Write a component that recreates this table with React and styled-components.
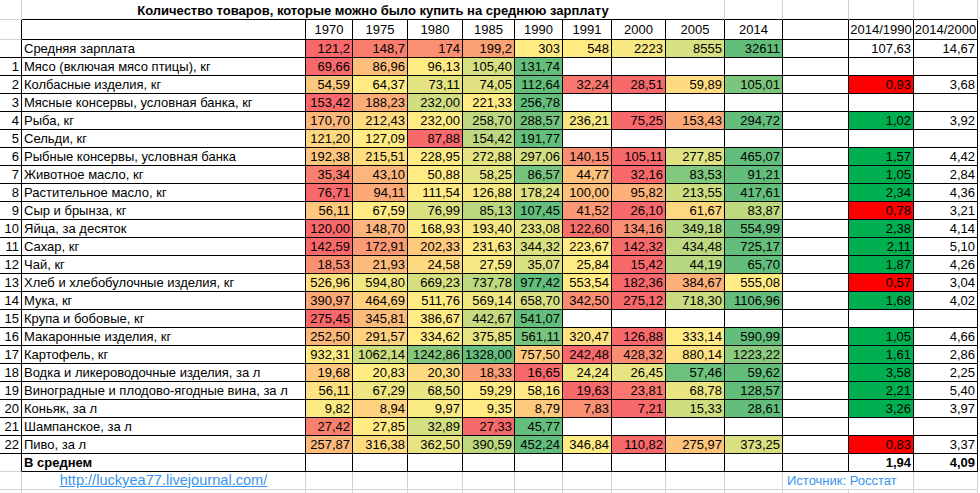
import React from 'react'
import styled, { createGlobalStyle } from 'styled-components'

const GlobalStyle = createGlobalStyle`
  html, body { margin: 0; padding: 0; background: #fff; overflow: hidden; }
  body { font-family: "Liberation Sans", Arial, sans-serif; font-size: 13px; color: #000; }
`

const GRID = '#d4d4d4'
const years = ['1970', '1975', '1980', '1985', '1990', '1991', '2000', '2005', '2014']

const rows = [
  { n: 1, label: 'Мясо (включая мясо птицы), кг', v: ['69,66', '86,96', '96,13', '105,40', '131,74'] },
  { n: 2, label: 'Колбасные изделия, кг', v: ['54,59', '64,37', '73,11', '74,05', '112,64', '32,24', '28,51', '59,89', '105,01'], r1: '0,93', r2: '3,68' },
  { n: 3, label: 'Мясные консервы, условная банка, кг', v: ['153,42', '188,23', '232,00', '221,33', '256,78'] },
  { n: 4, label: 'Рыба, кг', v: ['170,70', '212,43', '232,00', '258,70', '288,57', '236,21', '75,25', '153,43', '294,72'], r1: '1,02', r2: '3,92' },
  { n: 5, label: 'Сельди, кг', v: ['121,20', '127,09', '87,88', '154,42', '191,77'] },
  { n: 6, label: 'Рыбные консервы, условная банка', v: ['192,38', '215,51', '228,95', '272,88', '297,06', '140,15', '105,11', '277,85', '465,07'], r1: '1,57', r2: '4,42' },
  { n: 7, label: 'Животное масло, кг', v: ['35,34', '43,10', '50,88', '58,25', '86,57', '44,77', '32,16', '83,53', '91,21'], r1: '1,05', r2: '2,84' },
  { n: 8, label: 'Растительное масло, кг', v: ['76,71', '94,11', '111,54', '126,88', '178,24', '100,00', '95,82', '213,55', '417,61'], r1: '2,34', r2: '4,36' },
  { n: 9, label: 'Сыр и брынза, кг', v: ['56,11', '67,59', '76,99', '85,13', '107,45', '41,52', '26,10', '61,67', '83,87'], r1: '0,78', r2: '3,21' },
  { n: 10, label: 'Яйца, за десяток', v: ['120,00', '148,70', '168,93', '193,40', '233,08', '122,60', '134,16', '349,18', '554,99'], r1: '2,38', r2: '4,14' },
  { n: 11, label: 'Сахар, кг', v: ['142,59', '172,91', '202,33', '231,63', '344,32', '223,67', '142,32', '434,48', '725,17'], r1: '2,11', r2: '5,10' },
  { n: 12, label: 'Чай, кг', v: ['18,53', '21,93', '24,58', '27,59', '35,07', '25,84', '15,42', '44,19', '65,70'], r1: '1,87', r2: '4,26' },
  { n: 13, label: 'Хлеб и хлебобулочные изделия, кг', v: ['526,96', '594,80', '669,23', '737,78', '977,42', '553,54', '182,36', '384,67', '555,08'], r1: '0,57', r2: '3,04' },
  { n: 14, label: 'Мука, кг', v: ['390,97', '464,69', '511,76', '569,14', '658,70', '342,50', '275,12', '718,30', '1106,96'], r1: '1,68', r2: '4,02' },
  { n: 15, label: 'Крупа и бобовые, кг', v: ['275,45', '345,81', '386,67', '442,67', '541,07'] },
  { n: 16, label: 'Макаронные изделия, кг', v: ['252,50', '291,57', '334,62', '375,85', '561,11', '320,47', '126,88', '333,14', '590,99'], r1: '1,05', r2: '4,66' },
  { n: 17, label: 'Картофель, кг', v: ['932,31', '1062,14', '1242,86', '1328,00', '757,50', '242,48', '428,32', '880,14', '1223,22'], r1: '1,61', r2: '2,86' },
  { n: 18, label: 'Водка и ликероводочные изделия, за л', v: ['19,68', '20,83', '20,30', '18,33', '16,65', '24,24', '26,45', '57,46', '59,62'], r1: '3,58', r2: '2,25' },
  { n: 19, label: 'Виноградные и плодово-ягодные вина, за л', v: ['56,11', '67,29', '68,50', '59,29', '58,16', '19,63', '23,81', '68,78', '128,57'], r1: '2,21', r2: '5,40' },
  { n: 20, label: 'Коньяк, за л', v: ['9,82', '8,94', '9,97', '9,35', '8,79', '7,83', '7,21', '15,33', '28,61'], r1: '3,26', r2: '3,97' },
  { n: 21, label: 'Шампанское, за л', v: ['27,42', '27,85', '32,89', '27,33', '45,77'] },
  { n: 22, label: 'Пиво, за л', v: ['257,87', '316,38', '362,50', '390,59', '452,24', '346,84', '110,82', '275,97', '373,25'], r1: '0,83', r2: '3,37' },
]

const salary = ['121,2', '148,7', '174', '199,2', '303', '548', '2223', '8555', '32611']

// excel 3-color scale: min red, median yellow, max green
const RED = [248, 105, 107]
const YEL = [255, 235, 132]
const GRN = [99, 190, 123]
const num = s => parseFloat(s.replace(',', '.'))
const mix = (a, b, t) => `rgb(${a.map((c, i) => Math.round(c + (b[i] - c) * t)).join(',')})`

function scaleColors(vals) {
  const nums = vals.map(num)
  const sorted = [...nums].sort((a, b) => a - b)
  const min = sorted[0]
  const max = sorted[sorted.length - 1]
  const mid = sorted[Math.floor(sorted.length / 2)]
  return nums.map(v => {
    if (v <= mid) return mix(RED, YEL, mid === min ? 1 : (v - min) / (mid - min))
    return mix(YEL, GRN, (v - mid) / (max - mid))
  })
}

const Sheet = styled.div`
  display: grid;
  grid-template-columns: 22px 284px 47px 55px 55px 52px 48px 49px 54px 59px 58px 66px 65px 64px;
  grid-template-rows: 20px 20px repeat(26, 18px);
  width: 978px;
`

const Cell = styled.div`
  box-sizing: border-box;
  display: flex;
  align-items: center;
  justify-content: ${p => (p.$align === 'center' ? 'center' : p.$align === 'left' ? 'flex-start' : 'flex-end')};
  padding: 0 2px;
  white-space: nowrap;
  line-height: 17px;
  border-right: 1px solid ${p => (p.$softRight ? GRID : '#000')};
  border-bottom: 1px solid ${p => (p.$softBottom ? GRID : '#000')};
  background: ${p => p.$fill || '#fff'};
  font-weight: ${p => (p.$bold ? 700 : 400)};
  grid-column: ${p => (p.$span ? `span ${p.$span}` : 'auto')};
`

const Title = styled(Cell)`
  justify-content: center;
  font-weight: 700;
  padding-top: 1px;
`

const Label = styled(Cell)`
  justify-content: flex-start;
  padding-left: 2px;
`

const Ratio = styled(Cell)`
  background: ${p => (p.$tone === 'bad' ? '#ff0000' : p.$tone === 'good' ? '#00b050' : '#fff')};
`

const Link = styled.a`
  color: #3a94ee;
  font-size: 14.6px;
  text-decoration: underline;
`

const Source = styled.span`
  color: #3a94ee;
  padding-left: 2px;
`

function DataRow({ n, label, v, r1, r2, bold, softIndex }) {
  const colors = v.length ? scaleColors(v) : []
  return (
    <>
      <Cell $softBottom={softIndex}>{n}</Cell>
      <Label $bold={bold}>{label}</Label>
      {years.map((y, i) => (
        <Cell key={y} $fill={v[i] ? colors[i] : undefined}>{v[i] || ''}</Cell>
      ))}
      <Cell />
      <Ratio $tone={r1 && n ? (num(r1) < 1 ? 'bad' : 'good') : undefined} $bold={bold}>{r1 || ''}</Ratio>
      <Cell $bold={bold}>{r2 || ''}</Cell>
    </>
  )
}

function GreyRow() {
  return Array.from({ length: 14 }, (_, i) => <Cell key={i} $softRight $softBottom />)
}

export default function App() {
  return (
    <>
      <GlobalStyle />
      <Sheet>
        <Cell $softRight $softBottom />
        <Title $span={9} $softRight>Количество товаров, которые можно было купить на среднюю зарплату</Title>
        <Cell $softRight />
        <Cell $softRight />
        <Cell $softRight />
        <Cell $softRight />

        <Cell $softBottom />
        <Cell />
        {years.map(y => <Cell key={y} $align="center">{y}</Cell>)}
        <Cell />
        <Cell $align="center">2014/1990</Cell>
        <Cell $align="center">2014/2000</Cell>

        <DataRow n="" label="Средняя зарплата" v={salary} r1="107,63" r2="14,67" />
        {rows.map(r => <DataRow key={r.n} {...r} />)}
        <DataRow n="" label="В среднем" v={[]} r1="1,94" r2="4,09" bold softIndex />

        <Cell $softRight $softBottom />
        <Cell $softRight $softBottom $align="center">
          <Link href="#">http://luckyea77.livejournal.com/</Link>
        </Cell>
        {years.map(y => <Cell key={y} $softRight $softBottom />)}
        <Cell $span={2} $softRight $softBottom $align="left"><Source>Источник: Росстат</Source></Cell>
        <Cell $softRight $softBottom />

        <GreyRow />
      </Sheet>
    </>
  )
}
